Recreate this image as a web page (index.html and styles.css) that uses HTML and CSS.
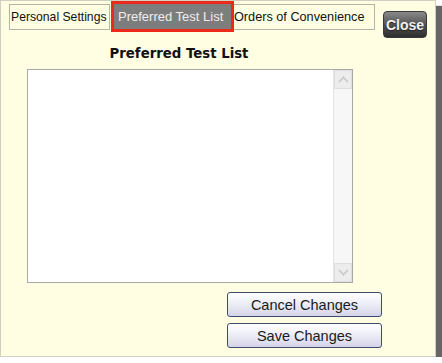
FILE: index.html
```html
<!DOCTYPE html>
<html>
<head>
<meta charset="utf-8">
<link rel="stylesheet" href="styles.css">
</head>
<body>
<div class="dialog">
  <div class="toprow">
    <div class="tab tab-first">Personal Settings</div>
    <div class="tab tab-active"><span class="tab-inner">Preferred Test List</span></div>
    <div class="tab tab-last">Orders of Convenience</div>
    <button class="close">Close</button>
  </div>
  <div class="content">
    <div class="title">Preferred Test List</div>
    <div class="listbox">
      <div class="listarea"></div>
      <div class="scrollbar">
        <div class="sbtn"><svg width="11" height="7" viewBox="0 0 11 7"><path d="M1 6 L5.5 1.5 L10 6" fill="none" stroke="#c9c9c9" stroke-width="1.6"/></svg></div>
        <div class="strack"></div>
        <div class="sbtn"><svg width="11" height="7" viewBox="0 0 11 7"><path d="M1 1 L5.5 5.5 L10 1" fill="none" stroke="#c9c9c9" stroke-width="1.6"/></svg></div>
      </div>
    </div>
    <div class="actions">
      <button class="btn">Cancel Changes</button>
      <button class="btn">Save Changes</button>
    </div>
  </div>
</div>
</body>
</html>
```
FILE: styles.css
```css
html, body {
  margin: 0;
  padding: 0;
  background: #ffffff;
}
.dialog {
  box-sizing: border-box;
  width: 436px;
  height: 357px;
  border: 1px solid #cfcfc2;
  background: #fffee2;
  box-shadow: 6px 6px 1px #666666;
  font-family: "Liberation Sans", Arial, sans-serif;
  display: flex;
  flex-direction: column;
}
.toprow {
  display: flex;
  align-items: flex-start;
  padding: 3px 0 0 8px;
  height: 35px;
  box-sizing: border-box;
}
.tab {
  box-sizing: border-box;
  height: 26px;
  border: 1px solid #b4b4a8;
  padding: 0 1px;
  line-height: 24px;
  color: #111;
  white-space: nowrap;
}
.tab-first {
  width: 101px;
  font-size: 12.2px;
}
.tab-active {
  width: 123px;
  height: 31px;
  margin-top: -3px;
  margin-left: 1px;
  border: 3px solid #ec2a1c;
  padding: 0;
  background: #7d7d7d;
  display: flex;
  font-size: 13px;
}
.tab-inner {
  color: #ededed;
  padding: 0 0 0 4px;
  line-height: 25px;
}
.tab-last {
  width: 141px;
  padding: 0;
  border-left: none;
  font-size: 12.7px;
}
.close {
  margin: 7px 8px 0 auto;
  width: 44px;
  height: 27px;
  border: 1px solid #3a3a3a;
  border-radius: 4px;
  background: linear-gradient(#8a8a8a, #4e4e4e 55%, #2e2e2e);
  color: #f2f2f2;
  font-family: "Liberation Sans", Arial, sans-serif;
  font-weight: bold;
  font-size: 14px;
  padding: 0;
  text-shadow: 0 1px 1px #222;
}
.content {
  display: flex;
  flex-direction: column;
  padding-left: 26px;
}
.title {
  width: 304px;
  margin-top: 10px;
  text-align: center;
  font-family: "DejaVu Sans", Verdana, sans-serif;
  font-weight: bold;
  font-size: 13.3px;
  line-height: 16px;
  color: #111;
}
.listbox {
  box-sizing: border-box;
  margin-top: 7px;
  width: 326px;
  height: 214px;
  border: 1px solid #a9a9a9;
  background: #fff;
  display: flex;
}
.listarea {
  flex: 1;
}
.scrollbar {
  width: 18px;
  border-left: 1px solid #e4e4e4;
  background: #f7f7f7;
  display: flex;
  flex-direction: column;
}
.sbtn {
  box-sizing: border-box;
  height: 19px;
  border: 1px solid #dedede;
  background: #ececec;
  display: flex;
  align-items: center;
  justify-content: center;
}
.strack {
  flex: 1;
}
.actions {
  display: flex;
  flex-direction: column;
  gap: 6px;
  margin: 9px 0 0 200px;
}
.btn {
  box-sizing: border-box;
  width: 155px;
  height: 25px;
  border: 1px solid #3e4d6e;
  border-radius: 3px;
  background: linear-gradient(#ffffff, #eeeef8 45%, #d4d4e8);
  font-family: "Liberation Sans", Arial, sans-serif;
  font-size: 14.5px;
  color: #1a1a1a;
  padding: 0;
}
```
